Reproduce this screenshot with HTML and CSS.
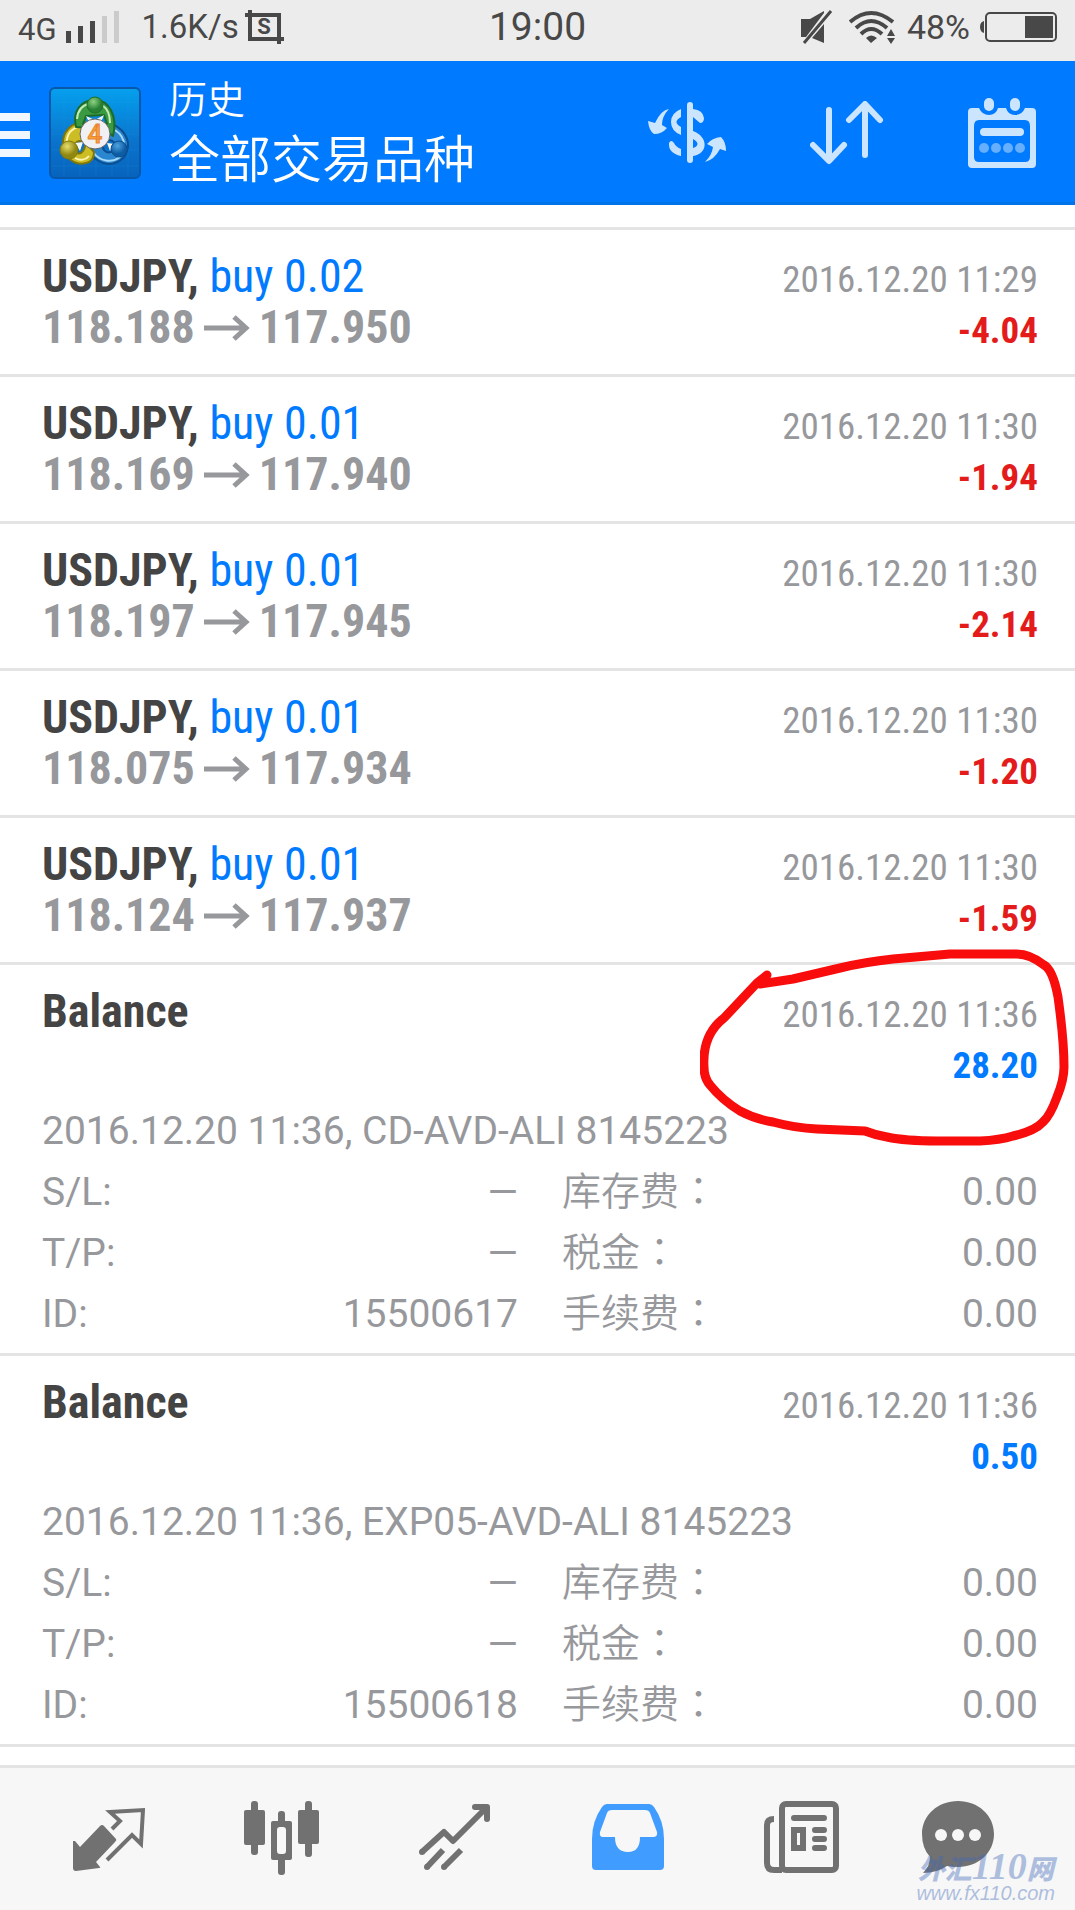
FILE: index.html
```
<!DOCTYPE html>
<html lang="zh-CN">
<head>
    <meta charset="UTF-8">
    <meta name="viewport" content="width=device-width, initial-scale=1.0">
    <title>历史</title>
    <link rel="stylesheet" href="styles.css">
</head>
<body>
    <!-- arrow between open and close price -->
    <svg class="defs" aria-hidden="true">
        <symbol id="arrow" viewBox="0 0 46 26">
            <path d="M0 13H41M30 2L42 13L30 24" fill="none" stroke="currentColor" stroke-width="5"/>
        </symbol>
    </svg>

    <div class="status-bar">
        <div class="status-left">
            <span class="network">4G</span>
            <svg class="signal" width="54" height="34" viewBox="0 0 54 34">
                <path d="M0 21h5v12H0zM12 16h5v17h-5zM24 11h5v22h-5z" fill="#484848"/>
                <path d="M36 6h5v27h-5zM48 1h5v32h-5z" fill="#cbcbcb"/>
            </svg>
            <span class="speed">1.6K/s</span>
            <svg width="39" height="34" viewBox="0 0 39 34">
                <path d="M0 5H34V34M5 0V29H39" fill="none" stroke="#484848" stroke-width="4"/>
                <text x="19" y="24" class="capture-letter">S</text>
            </svg>
        </div>
        <span class="clock">19:00</span>
        <div class="status-right">
            <svg width="32" height="34" viewBox="0 0 32 34">
                <path d="M0 9H9L23 1V3L5 27H0zM11 28L23 14V33z" fill="#484848"/>
                <path d="M30 1L3 33" stroke="#484848" stroke-width="3"/>
            </svg>
            <svg class="wifi" width="46" height="34" viewBox="0 0 46 34">
                <g fill="none" stroke="#484848" stroke-width="4">
                    <path d="M1 12Q22 -6 44 12"/>
                    <path d="M7 18Q22 4 38 18"/>
                    <path d="M12 24Q22 14 33 24"/>
                </g>
                <path d="M17 28Q22 23 28 28L22 33zM38 26L42 19L46 26zM38 28H46L42 34z" fill="#484848"/>
            </svg>
            <span class="percent">48%</span>
            <svg width="77" height="30" viewBox="0 0 77 30">
                <path d="M4 9Q0 10 0 15T4 21z" fill="#484848"/>
                <rect x="6" y="1" width="70" height="28" rx="4" fill="none" stroke="#484848" stroke-width="2"/>
                <path d="M45 4H73V26H45z" fill="#484848"/>
            </svg>
        </div>
    </div>

    <header class="app-bar">
        <button class="menu" type="button" aria-label="菜单"><span></span><span></span><span></span></button>
        <svg class="logo" width="92" height="92" viewBox="0 0 92 92">
            <defs>
                <linearGradient id="tile" x1="0" y1="0" x2="0" y2="1"><stop offset="0" stop-color="#05a0ee"/><stop offset="0.6" stop-color="#0a73cc"/><stop offset="1" stop-color="#0763bd"/></linearGradient>
                <radialGradient id="green" cx="0.4" cy="0.3"><stop offset="0" stop-color="#8fd283"/><stop offset="1" stop-color="#278033"/></radialGradient>
                <radialGradient id="yellow" cx="0.4" cy="0.3"><stop offset="0" stop-color="#e9dd6c"/><stop offset="1" stop-color="#8f8710"/></radialGradient>
                <radialGradient id="blue" cx="0.4" cy="0.3"><stop offset="0" stop-color="#4fa4de"/><stop offset="1" stop-color="#0d5da5"/></radialGradient>
            </defs>
            <rect x="1" y="1" width="90" height="90" rx="5" fill="url(#tile)" stroke="#0758a8" stroke-width="2"/>
            <path d="M15 2V90M31 2V90M47 2V90M63 2V90M79 2V90M2 15H90M2 31H90M2 47H90M2 63H90M2 79H90" stroke="#2aa0e8" stroke-opacity="0.15"/>
            <!-- three linked people: blue, yellow, green -->
            <g stroke-linejoin="round">
                <path fill-rule="evenodd" d="M60 36C74 40 82 53 78 64C75 75 60 81 50 74C43 70 39 66 38 61L58 55zM57 53C50 62 57 68 64 64C70 60 66 52 57 53z" fill="#2a86cf" stroke="#0b4f91" stroke-width="2"/>
                <path d="M44 65C51 75 63 76 71 70M66 43C72 47 75 53 75 58" fill="none" stroke="#a5dafa" stroke-width="2"/>
                <path fill-rule="evenodd" d="M36 35C22 35 13 45 14 58C15 71 26 79 37 76C42 75 45 71 45 65L36 54zM30 54C24 56 23 64 28 66C33 68 37 62 36 54z" fill="#cdbd25" stroke="#7d760c" stroke-width="2"/>
                <path d="M18 57C17 47 23 41 32 39M26 71C31 74 37 73 40 69" fill="none" stroke="#fbf6b5" stroke-width="2"/>
                <path fill-rule="evenodd" d="M27 40C23 24 32 13 46 13C60 13 69 29 64 49L55 42zM37 29L34 37H58L55 28z" fill="#3a9a42" stroke="#1d6b2b" stroke-width="2"/>
                <path d="M28 32C29 22 34 18 40 17M53 18C59 22 61 29 61 36" fill="none" stroke="#c4ecb8" stroke-width="2"/>
            </g>
            <path d="M37 29L46 33L55 28L52 35H40zM26 56L34 55L31 64zM58 56L66 57L61 64z" fill="#f4f8f4"/>
            <circle cx="46" cy="18" r="8" fill="url(#green)" stroke="#226f2c"/>
            <circle cx="20" cy="63" r="9" fill="url(#yellow)" stroke="#837b0f"/>
            <circle cx="70" cy="62" r="8" fill="url(#blue)" stroke="#0c4f90"/>
            <circle cx="46" cy="47" r="15" fill="#f1f1f3" stroke="#666"/>
            <text x="46" y="56" class="logo-number">4</text>
        </svg>
        <div class="titles">
            <h1>历史</h1>
            <p>全部交易品种</p>
        </div>
        <div class="actions">
            <button type="button" aria-label="品种">
                <svg width="78" height="62" viewBox="0 0 78 62">
                    <path d="M42 3V58" fill="none" stroke="#cce5ff" stroke-width="6" stroke-linecap="round"/>
                    <path d="M45 7Q55 8 56 16Q56 21 52 21L45 15zM33 7V15Q24 20 33 25V33Q23 29 23 20Q23 11 33 7zM45 29C61 35 60 52 45 54V46C51 44 51 40 45 37zM33 54V47Q28 45 26 41Q23 37 21 41Q20 51 33 54z" fill="#cce5ff"/>
                    <path d="M21 7Q13 8 7 21L0 19Q1 29 6 32Q14 32 19 26L14 23Q14 14 21 7zM57 60Q66 58 72 47L78 49Q78 40 73 35Q64 36 59 42L65 45Q64 53 57 60z" fill="#cce5ff"/>
                </svg>
            </button>
            <button type="button" aria-label="排序">
                <svg width="74" height="64" viewBox="0 0 74 64">
                    <path d="M19 9V59M3 44L19 60L34 44M55 54V4M39 19L55 3L70 19" fill="none" stroke="#cce5ff" stroke-width="6" stroke-linecap="round" stroke-linejoin="round"/>
                </svg>
            </button>
            <button type="button" aria-label="日期">
                <svg width="68" height="70" viewBox="0 0 68 70">
                    <path fill-rule="evenodd" d="M4 10H11Q14 17 21 17Q28 17 30 10H38Q40 17 47 17Q54 17 57 10H64Q68 10 68 14V66Q68 70 64 70H4Q0 70 0 66V14Q0 10 4 10zM11 22Q6 22 6 28V59Q6 64 11 64H57Q62 64 62 59V28Q62 22 57 22z" fill="#cce5ff"/>
                    <rect x="16" y="0" width="10" height="13" rx="5" fill="#cce5ff"/>
                    <rect x="42" y="0" width="10" height="13" rx="5" fill="#cce5ff"/>
                    <rect x="12" y="30" width="44" height="8" rx="4" fill="#cce5ff"/>
                    <g fill="#66afff"><circle cx="16" cy="50" r="5"/><circle cx="28" cy="50" r="5"/><circle cx="40" cy="50" r="5"/><circle cx="52" cy="50" r="5"/></g>
                </svg>
            </button>
        </div>
    </header>

    <main class="history">
        <article class="deal">
            <h2>USDJPY, <span class="side">buy 0.02</span></h2>
            <time>2016.12.20 11:29</time>
            <p class="prices">118.188 <svg><use href="#arrow"/></svg> 117.950</p>
            <p class="loss">-4.04</p>
        </article>
        <article class="deal">
            <h2>USDJPY, <span class="side">buy 0.01</span></h2>
            <time>2016.12.20 11:30</time>
            <p class="prices">118.169 <svg><use href="#arrow"/></svg> 117.940</p>
            <p class="loss">-1.94</p>
        </article>
        <article class="deal">
            <h2>USDJPY, <span class="side">buy 0.01</span></h2>
            <time>2016.12.20 11:30</time>
            <p class="prices">118.197 <svg><use href="#arrow"/></svg> 117.945</p>
            <p class="loss">-2.14</p>
        </article>
        <article class="deal">
            <h2>USDJPY, <span class="side">buy 0.01</span></h2>
            <time>2016.12.20 11:30</time>
            <p class="prices">118.075 <svg><use href="#arrow"/></svg> 117.934</p>
            <p class="loss">-1.20</p>
        </article>
        <article class="deal">
            <h2>USDJPY, <span class="side">buy 0.01</span></h2>
            <time>2016.12.20 11:30</time>
            <p class="prices">118.124 <svg><use href="#arrow"/></svg> 117.937</p>
            <p class="loss">-1.59</p>
        </article>
        <article class="deal balance">
            <h2>Balance</h2>
            <time>2016.12.20 11:36</time>
            <p class="profit">28.20</p>
            <div class="details">
                <p>2016.12.20 11:36, CD-AVD-ALI 8145223</p>
                <dl>
                    <div><dt>S/L:</dt><dd>—</dd></div>
                    <div><dt>库存费<span class="colon" lang="zh-TW">：</span></dt><dd>0.00</dd></div>
                    <div><dt>T/P:</dt><dd>—</dd></div>
                    <div><dt>税金<span class="colon" lang="zh-TW">：</span></dt><dd>0.00</dd></div>
                    <div><dt>ID:</dt><dd>15500617</dd></div>
                    <div><dt>手续费<span class="colon" lang="zh-TW">：</span></dt><dd>0.00</dd></div>
                </dl>
            </div>
            <!-- hand drawn mark around the payout -->
            <svg class="mark" width="375" height="205" viewBox="0 0 375 205">
                <path d="M67 30L57 38L24 73Q2 90 4 122Q4 133 10 140Q22 155 40 166Q55 174 73 177Q95 183 117 184L165 186Q175 190 187 192Q205 196 237 196H280Q300 195 313 191Q335 186 343 177Q350 171 357 152Q364 135 364 122Q364 95 358 52Q353 25 344 20Q330 9 317 9H250L193 14Q165 17 140 23L93 34L60 39"/>
            </svg>
        </article>
        <article class="deal balance">
            <h2>Balance</h2>
            <time>2016.12.20 11:36</time>
            <p class="profit">0.50</p>
            <div class="details">
                <p>2016.12.20 11:36, EXP05-AVD-ALI 8145223</p>
                <dl>
                    <div><dt>S/L:</dt><dd>—</dd></div>
                    <div><dt>库存费<span class="colon" lang="zh-TW">：</span></dt><dd>0.00</dd></div>
                    <div><dt>T/P:</dt><dd>—</dd></div>
                    <div><dt>税金<span class="colon" lang="zh-TW">：</span></dt><dd>0.00</dd></div>
                    <div><dt>ID:</dt><dd>15500618</dd></div>
                    <div><dt>手续费<span class="colon" lang="zh-TW">：</span></dt><dd>0.00</dd></div>
                </dl>
            </div>
        </article>
    </main>

    <nav class="tabs">
        <button type="button" aria-label="行情">
            <svg width="72" height="74" viewBox="0 0 72 74">
                <path d="M0 40L2 40L7 46L27 25Q29 23 31 25L43 38Q44 39 42 41L23 61L27 66Q28 67 26 67L3 70Q0 70 0 67z" fill="#717171"/>
                <path d="M39 28L47 20L37 11L70 9L68 43L59 34L34 59" fill="none" stroke="#717171" stroke-width="4"/>
            </svg>
        </button>
        <button type="button" aria-label="图表">
            <svg width="75" height="74" viewBox="0 0 75 74">
                <g fill="#717171">
                    <rect x="0" y="9" width="21" height="35" rx="2"/><rect x="7" y="0" width="7" height="54" rx="3"/>
                    <rect x="54" y="9" width="21" height="34" rx="2"/><rect x="61" y="0" width="7" height="56" rx="3"/>
                    <rect x="27" y="20" width="21" height="39" rx="2"/><rect x="34" y="10" width="7" height="64" rx="3"/>
                </g>
                <rect x="33" y="26" width="9" height="27" rx="3" fill="#f7f7f7"/>
            </svg>
        </button>
        <button type="button" aria-label="交易">
            <svg width="72" height="74" viewBox="0 0 72 74">
                <path d="M3 51L25 31L34 40L67 7M56 6H68V18M8 66L24 49M25 66L42 49" fill="none" stroke="#717171" stroke-width="6" stroke-linejoin="round"/>
                <g fill="#717171"><circle cx="3" cy="51" r="3"/><circle cx="8" cy="66" r="3"/><circle cx="25" cy="66" r="3"/><circle cx="56" cy="6" r="3"/><circle cx="68" cy="18" r="3"/></g>
            </svg>
        </button>
        <button type="button" aria-label="历史" aria-current="page">
            <svg width="72" height="74" viewBox="0 0 72 74">
                <path fill-rule="evenodd" d="M15 3H57Q60 3 62 6Q72 20 72 38V65Q72 69 68 69H4Q0 69 0 65V38Q0 20 10 6Q12 3 15 3zM20 9Q16 9 15 12L8 31Q7 36 11 36H23Q23 51 36 51Q48 51 48 36H61Q66 36 65 31L58 12Q57 9 53 9z" fill="#419cff"/>
            </svg>
        </button>
        <button type="button" aria-label="新闻">
            <svg width="75" height="74" viewBox="0 0 75 74">
                <g fill="none" stroke="#717171" stroke-width="6">
                    <rect x="18" y="3" width="54" height="66" rx="4"/>
                    <path d="M10 18Q3 18 3 24V62Q3 69 10 69H18"/>
                    <path d="M30 17H60M51 29H60M51 38H60M51 47H60" stroke-linecap="round"/>
                    <rect x="30" y="29" width="9" height="18"/>
                </g>
            </svg>
        </button>
        <button type="button" aria-label="消息">
            <svg width="72" height="74" viewBox="0 0 72 74">
                <path d="M36 0C56 0 72 14 72 33C72 52 56 66 36 66Q30 66 25 65Q15 72 1 72Q8 65 8 56Q0 47 0 33C0 14 16 0 36 0z" fill="#717171"/>
                <g fill="#f7f7f7"><circle cx="19" cy="34" r="6"/><circle cx="36" cy="34" r="6"/><circle cx="53" cy="34" r="6"/></g>
            </svg>
        </button>
        <div class="watermark">
            <strong>外汇<em>110</em>网</strong>
            <span>www.fx110.com</span>
        </div>
    </nav>
</body>
</html>
```
FILE: styles.css
```
* {
    box-sizing: border-box;
}
body {
    font-family: Roboto, 'Noto Sans CJK SC', sans-serif;
    background: #fff;
    color: #444;
    margin: 0;
    min-height: 100vh;
    display: flex;
    flex-direction: column;
}
h1, h2, p, dl, dd {
    margin: 0;
}
button {
    background: none;
    border: none;
    padding: 0;
    cursor: pointer;
}
svg {
    display: block;
    flex-shrink: 0;
}
.defs {
    display: none;
}

/* phone status bar */
.status-bar {
    height: 61px;
    padding: 0 18px 8px;
    background: #ececec;
    color: #484848;
    display: grid;
    grid-template-columns: 1fr auto 1fr;
    align-items: center;
    line-height: 40px;
}
.status-left, .status-right {
    display: flex;
    align-items: center;
}
.status-right {
    justify-content: flex-end;
}
.network {
    font-size: 31px;
    padding-top: 6px;
}
.signal {
    margin: 0 22px 0 9px;
}
.speed {
    font-size: 33px;
    margin-right: 6px;
}
.capture-letter {
    font-size: 22px;
    font-weight: bold;
    fill: #484848;
    text-anchor: middle;
}
.clock {
    font-size: 39px;
}
.wifi {
    margin: 0 12px 0 16px;
}
.percent {
    font-size: 34px;
    margin-right: 10px;
}

/* app bar */
.app-bar {
    display: flex;
    align-items: center;
    height: 144px;
    padding-right: 39px;
    background: #007aff;
    box-shadow: inset 0 -3px #0073e8;
    color: #fff;
}
.menu {
    display: flex;
    flex-direction: column;
    gap: 10px;
    width: 30px;
    margin-right: 19px;
    padding-top: 4px;
}
.menu span {
    height: 8px;
    background: #f0f7ff;
}
.logo-number {
    font-family: Roboto, sans-serif;
    font-size: 26px;
    font-weight: 500;
    fill: #f9a52c;
    stroke: #e8843c;
    text-anchor: middle;
}
.titles {
    margin-left: 28px;
    padding-bottom: 4px;
    font-family: 'Noto Sans CJK SC', sans-serif;
    font-weight: 350;
}
.titles h1 {
    font-size: 38px;
    font-weight: 350;
    line-height: 50px;
}
.titles p {
    font-size: 51px;
    line-height: 68px;
}
.actions {
    display: flex;
    align-items: center;
    gap: 84px;
    margin-left: auto;
}

/* history list */
.history {
    margin: 22px 0 18px;
    border-top: 3px solid #e4e4e4;
}
.deal {
    position: relative;
    display: grid;
    grid-template-columns: 1fr auto;
    grid-template-rows: 51px 51px;
    align-items: baseline;
    padding: 21px 37px 21px 42px;
    border-bottom: 3px solid #e4e4e4;
    font-family: 'Roboto Condensed', 'Liberation Sans Narrow', Roboto, sans-serif;
    font-size: 37px;
    line-height: 44px;
}
.deal h2, .prices {
    font-size: 46px;
    font-weight: bold;
    line-height: 51px;
}
.deal .side {
    color: #007aff;
    font-weight: normal;
}
.deal time {
    color: #97989c;
}
.prices {
    display: flex;
    align-items: center;
    gap: 9px;
    color: #97989c;
}
.prices svg {
    width: 46px;
    height: 26px;
}
.loss, .profit {
    grid-column: 2;
    text-align: right;
    font-weight: bold;
}
.loss {
    color: #e31b1b;
}
.profit {
    align-self: end;
    color: #007aff;
}
.balance {
    padding-bottom: 8px;
}
.details {
    grid-column: 1 / 3;
    margin-top: 13px;
    font-family: Roboto, 'Noto Sans CJK SC', sans-serif;
    font-size: 39px;
    line-height: 61px;
    color: #97989c;
}
.details dl {
    display: grid;
    grid-template-columns: 1fr 1fr;
    column-gap: 44px;
}
.details dl div {
    display: flex;
    justify-content: space-between;
    height: 61px;
}
.details div:nth-child(even) dt {
    font-weight: 350;
}
.colon {
    font-family: 'Noto Sans CJK TC', sans-serif;
    line-height: 40px;
}
.mark {
    position: absolute;
    top: -20px;
    right: 0;
}
.mark path {
    fill: none;
    stroke: #f80c0c;
    stroke-width: 9;
    stroke-linecap: round;
    stroke-linejoin: round;
}

/* bottom tabs */
.tabs {
    position: relative;
    display: grid;
    grid-template-columns: repeat(5, 5fr) 4fr;
    align-items: center;
    justify-items: center;
    height: 145px;
    margin-top: auto;
    padding: 0 48px 2px 22px;
    background: #f7f7f7;
    border-top: 3px solid #e4e4e4;
}
.watermark {
    position: absolute;
    right: 20px;
    bottom: 6px;
    display: flex;
    flex-direction: column;
    align-items: center;
    color: #4169b9;
    opacity: 0.4;
    font-style: italic;
}
.watermark strong {
    font-family: 'Noto Sans CJK SC', sans-serif;
    font-size: 27px;
    font-weight: 900;
    line-height: 28px;
}
.watermark em {
    font-family: 'Liberation Serif', serif;
    font-size: 38px;
}
.watermark span {
    font-family: 'Liberation Sans', sans-serif;
    font-size: 20px;
    line-height: 22px;
}
```
